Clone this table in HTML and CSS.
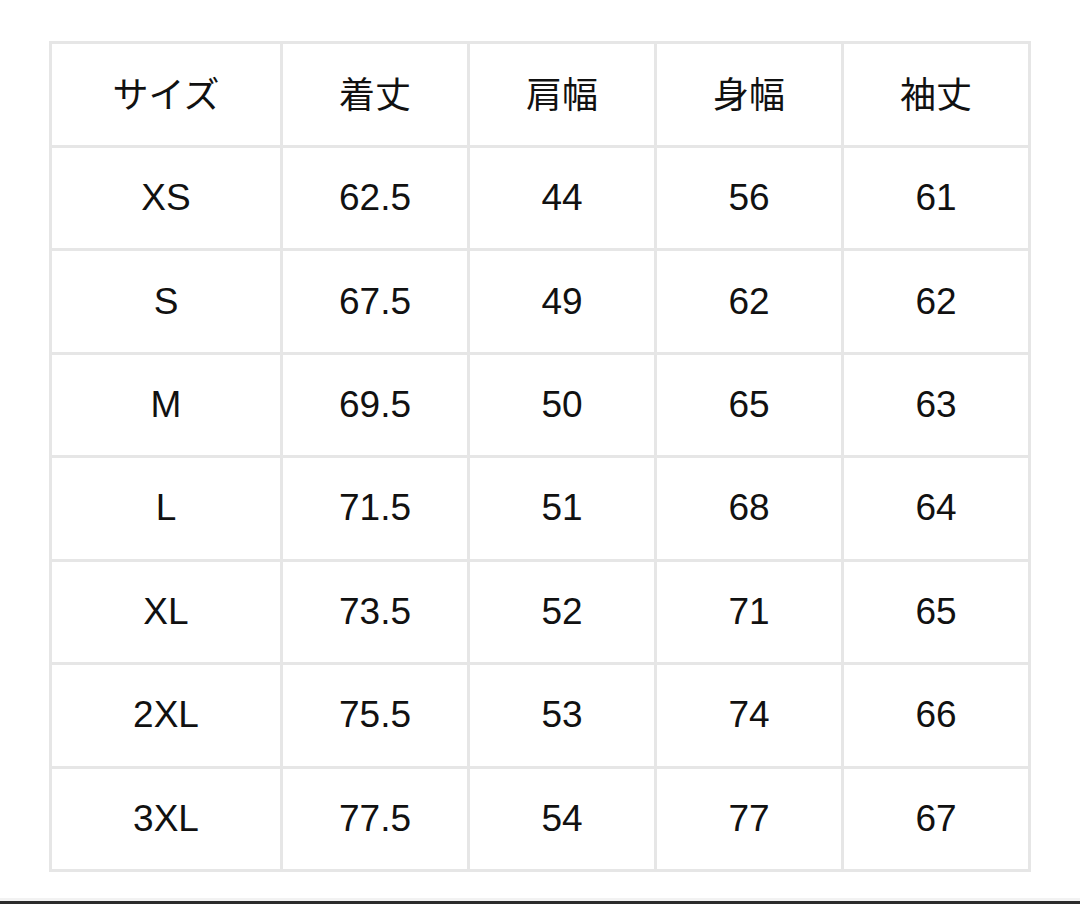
FILE: index.html
```html
<!DOCTYPE html>
<html lang="ja">
<head>
<meta charset="utf-8">
<link rel="stylesheet" href="styles.css">
</head>
<body>
<div class="page">
  <table class="size-table">
    <colgroup>
      <col class="c-size"><col class="c-n"><col class="c-n"><col class="c-n"><col class="c-n">
    </colgroup>
    <thead>
      <tr><th>サイズ</th><th>着丈</th><th>肩幅</th><th>身幅</th><th>袖丈</th></tr>
    </thead>
    <tbody>
      <tr><td>XS</td><td>62.5</td><td>44</td><td>56</td><td>61</td></tr>
      <tr><td>S</td><td>67.5</td><td>49</td><td>62</td><td>62</td></tr>
      <tr><td>M</td><td>69.5</td><td>50</td><td>65</td><td>63</td></tr>
      <tr><td>L</td><td>71.5</td><td>51</td><td>68</td><td>64</td></tr>
      <tr><td>XL</td><td>73.5</td><td>52</td><td>71</td><td>65</td></tr>
      <tr><td>2XL</td><td>75.5</td><td>53</td><td>74</td><td>66</td></tr>
      <tr><td>3XL</td><td>77.5</td><td>54</td><td>77</td><td>67</td></tr>
    </tbody>
  </table>
  <div class="bottom-bar"></div>
</div>
</body>
</html>
```
FILE: styles.css
```css
html, body {
  margin: 0;
  padding: 0;
  background: #ffffff;
}
.page {
  width: 1080px;
  height: 904px;
  padding-top: 41px;
  box-sizing: border-box;
  display: flex;
  flex-direction: column;
}
.size-table {
  margin-left: 49px;
  width: 982px;
  border-collapse: collapse;
  table-layout: fixed;
  font-family: "Liberation Sans", Arial, "Noto Sans CJK JP", sans-serif;
  color: #111111;
}
.c-size { width: 231px; }
.c-n { width: 187px; }
.size-table th,
.size-table td {
  border: 3px solid #e6e6e6;
  text-align: center;
  vertical-align: middle;
  height: 99.43px;
  padding: 0 0 1px;
  font-size: 37px;
  font-weight: normal;
  line-height: 1;
}
.size-table th {
  font-family: "Noto Sans CJK JP", sans-serif;
  font-size: 36px;
  height: 96px;
  padding: 0 0 5px;
}
.bottom-bar {
  margin-top: auto;
  height: 3px;
  background: #2b2b2b;
  box-shadow: 0 -3px 0 #f2f2f2;
}
```
